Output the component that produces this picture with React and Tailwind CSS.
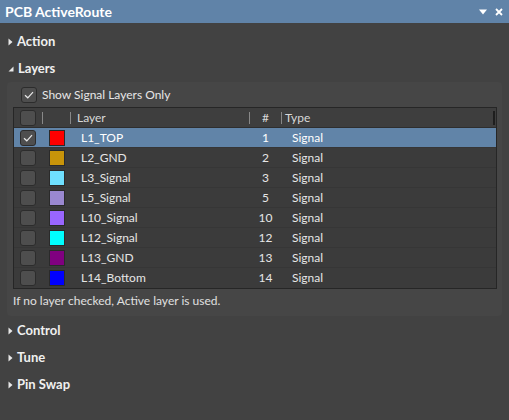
import React from "react";

const layers = [
  { name: "L1_TOP", color: "#ff0000", n: 1, checked: true },
  { name: "L2_GND", color: "#c8940a", n: 2 },
  { name: "L3_Signal", color: "#6fe0ff", n: 3 },
  { name: "L5_Signal", color: "#9a88d0", n: 5 },
  { name: "L10_Signal", color: "#9966ff", n: 10 },
  { name: "L12_Signal", color: "#00ffff", n: 12 },
  { name: "L13_GND", color: "#800080", n: 13 },
  { name: "L14_Bottom", color: "#0000ff", n: 14 },
];

function Check({ checked }) {
  return (
    <div className="w-[16px] h-[16px] rounded-[3px] border border-[#2c2c2c] bg-[#4e4e4e] flex items-center justify-center">
      {checked && (
        <svg width="10" height="8" viewBox="0 0 10 8">
          <path d="M1 4.2 L3.8 6.8 L9 1.2" fill="none" stroke="#e8e8e8" strokeWidth="1.2" />
        </svg>
      )}
    </div>
  );
}

function Right() {
  return (
    <svg width="5" height="8" viewBox="0 0 5 8" className="mr-[4px]">
      <path d="M0.5 0.5 L4.5 4 L0.5 7.5 Z" fill="#e8e8e8" />
    </svg>
  );
}

function Down() {
  return (
    <svg width="6" height="6" viewBox="0 0 6 6" className="mr-[4px]">
      <path d="M5.5 0.5 L5.5 5.5 L0.5 5.5 Z" fill="#e8e8e8" />
    </svg>
  );
}

function Section({ label, open }) {
  return (
    <div className="flex items-center h-[27px] pl-[8px] text-[13px] font-bold text-[#f0f0f0]">
      {open ? <Down /> : <Right />}
      <span>{label}</span>
    </div>
  );
}

export default function App() {
  return (
    <div
      className="w-[509px] h-[420px] bg-[#424242] text-[#e6e6e6] overflow-hidden"
      style={{ fontFamily: 'Lato, "Open Sans", sans-serif' }}
    >
      <div className="h-[23px] bg-[#6083a8] flex items-center justify-between pl-[5px] pr-[6px]">
        <span className="text-[14px] font-bold text-white">PCB ActiveRoute</span>
        <div className="flex items-center gap-[8px]">
          <svg width="8" height="6" viewBox="0 0 8 6">
            <path d="M0 0.5 L8 0.5 L4 5.5 Z" fill="#ffffff" />
          </svg>
          <svg width="8" height="8" viewBox="0 0 8 8">
            <path d="M1 1 L7 7 M7 1 L1 7" stroke="#ffffff" strokeWidth="1.8" />
          </svg>
        </div>
      </div>
      <div className="pt-[5px]">
        <Section label="Action" />
        <Section label="Layers" open />
        <div className="mx-[7px] rounded-[4px] bg-[#464646] pl-[6px] pr-[5px] pt-[5px] pb-[6px]">
          <div className="flex items-center h-[16px] pl-[8px] gap-[5px] text-[12px]">
            <Check checked />
            <span>Show Signal Layers Only</span>
          </div>
          <div className="mt-[4px] border border-[#262626] bg-[#3b3b3b] text-[12px]">
            <div className="flex items-center h-[20px] bg-[#3e3e3e] border-b border-[#2e2e2e] text-[#d8d8d8]">
              <div className="w-[28px] flex justify-center"><Check /></div>
              <div className="w-[1px] h-[12px] bg-[#888]"></div>
              <div className="w-[27px]"></div>
              <div className="w-[1px] h-[12px] bg-[#888]"></div>
              <div className="w-[178px] pl-[6px]">Layer</div>
              <div className="w-[1px] h-[12px] bg-[#888]"></div>
              <div className="w-[31px] text-center">#</div>
              <div className="w-[1px] h-[12px] bg-[#888]"></div>
              <div className="flex-1 pl-[3px]">Type</div>
              <div className="w-[2px] h-[14px] bg-[#1e1e1e] mr-[1px]"></div>
            </div>
            {layers.map((l) => (
              <div
                key={l.name}
                className={
                  "flex items-center h-[20px] border-b border-[#363636] last:border-b-0 " +
                  (l.checked ? "bg-[#6184a8] text-white" : "")
                }
              >
                <div className="w-[28px] flex justify-center"><Check checked={l.checked} /></div>
                <div className="w-[1px]"></div>
                <div className="w-[27px] flex justify-center">
                  <div className="w-[16px] h-[16px] border border-[#2a2a2a]" style={{ backgroundColor: l.color }}></div>
                </div>
                <div className="w-[1px]"></div>
                <div className="w-[178px] pl-[10px]">{l.name}</div>
                <div className="w-[1px]"></div>
                <div className="w-[31px] text-center">{l.n}</div>
                <div className="w-[1px]"></div>
                <div className="flex-1 pl-[10px]">Signal</div>
              </div>
            ))}
          </div>
          <div className="mt-[3px] text-[12px] text-[#e0e0e0]">If no layer checked, Active layer is used.</div>
        </div>
        <div className="pt-[1px]">
          <Section label="Control" />
          <Section label="Tune" />
          <Section label="Pin Swap" />
        </div>
      </div>
    </div>
  );
}
